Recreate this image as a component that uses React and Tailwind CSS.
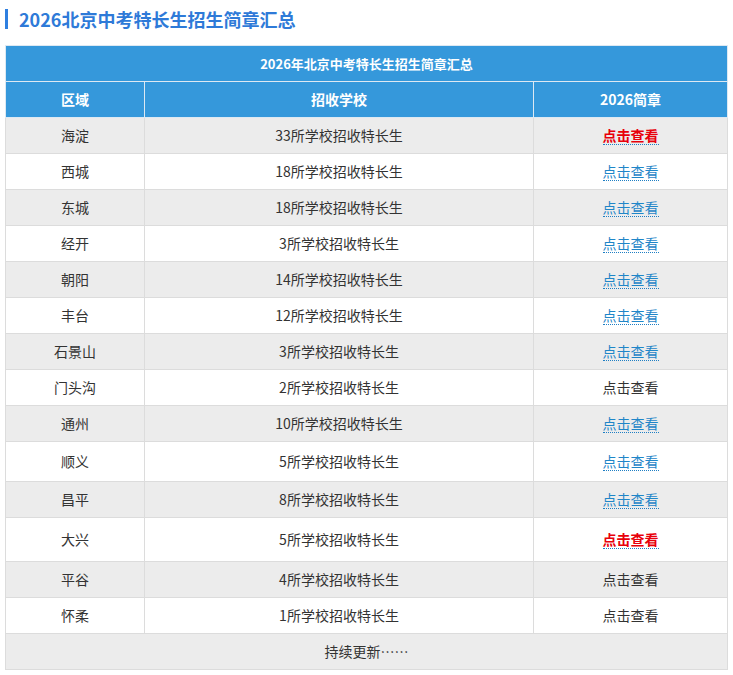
import React from 'react';

const rows = [
    { area: '海淀', schools: '33所学校招收特长生', link: 'red' },
    { area: '西城', schools: '18所学校招收特长生', link: 'blue' },
    { area: '东城', schools: '18所学校招收特长生', link: 'blue' },
    { area: '经开', schools: '3所学校招收特长生', link: 'blue' },
    { area: '朝阳', schools: '14所学校招收特长生', link: 'blue' },
    { area: '丰台', schools: '12所学校招收特长生', link: 'blue' },
    { area: '石景山', schools: '3所学校招收特长生', link: 'blue' },
    { area: '门头沟', schools: '2所学校招收特长生', link: 'none' },
    { area: '通州', schools: '10所学校招收特长生', link: 'blue' },
    { area: '顺义', schools: '5所学校招收特长生', link: 'blue', tall: 'h-[40px]' },
    { area: '昌平', schools: '8所学校招收特长生', link: 'blue' },
    { area: '大兴', schools: '5所学校招收特长生', link: 'red', tall: 'h-[44px]' },
    { area: '平谷', schools: '4所学校招收特长生', link: 'none' },
    { area: '怀柔', schools: '1所学校招收特长生', link: 'none' },
];

const LinkCell = ({ type }) => {
    if (type === 'none') return <span>点击查看</span>;
    return (
        <span
            className={`inline-block leading-[17px] border-b border-dotted border-[#1f7fc4] ${
                type === 'red' ? 'text-[#e8000b] font-bold' : 'text-[#1f86c8]'
            }`}
        >
            点击查看
        </span>
    );
};

const App = () => {
    return (
        <div
            className="w-[733px] h-[675px] bg-white overflow-hidden"
            style={{ fontFamily: '"Noto Sans CJK SC", "Noto Sans", sans-serif' }}
        >
            {/* Title */}
            <div className="flex items-center h-[38px] pl-[5px]">
                <span className="w-[3px] h-[20px] bg-[#2e7fe0]"></span>
                <h1 className="ml-[11px] text-[18px] font-bold text-[#2e7ad8] leading-none">
                    2026北京中考特长生招生简章汇总
                </h1>
            </div>

            <div className="pt-[7px] pl-[5px]">
                <table className="w-[722px] border-collapse table-fixed text-[14px] text-[#333]">
                    <colgroup>
                        <col className="w-[139px]" />
                        <col className="w-[389px]" />
                        <col className="w-[194px]" />
                    </colgroup>
                    <thead>
                        <tr className="h-[36px] bg-[#3598db]">
                            <th colSpan={3} className="border border-[#dde9f3] text-white text-[13px] font-bold">
                                2026年北京中考特长生招生简章汇总
                            </th>
                        </tr>
                        <tr className="h-[36px] bg-[#3598db]">
                            <th className="border border-[#dde9f3] text-white text-[14px] font-bold">区域</th>
                            <th className="border border-[#dde9f3] text-white text-[14px] font-bold">招收学校</th>
                            <th className="border border-[#dde9f3] text-white text-[14px] font-bold">2026简章</th>
                        </tr>
                    </thead>
                    <tbody>
                        {rows.map((r, i) => (
                            <tr
                                key={r.area}
                                className={`${r.tall || 'h-[36px]'} ${i % 2 === 0 ? 'bg-[#ececec]' : 'bg-white'}`}
                            >
                                <td className="border border-[#dcdcdc] text-center">{r.area}</td>
                                <td className="border border-[#dcdcdc] text-center">{r.schools}</td>
                                <td className="border border-[#dcdcdc] text-center">
                                    <LinkCell type={r.link} />
                                </td>
                            </tr>
                        ))}
                        <tr className="h-[36px] bg-[#ececec]">
                            <td colSpan={3} className="border border-[#dcdcdc] text-center">持续更新……</td>
                        </tr>
                    </tbody>
                </table>
            </div>
        </div>
    );
};

export default App;
